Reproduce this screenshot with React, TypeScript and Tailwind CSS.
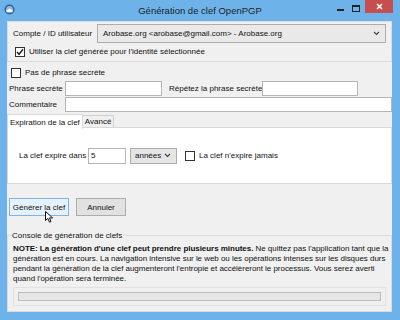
const FONT = "font-['Liberation_Sans','Arial',sans-serif]"

function Checkbox({ checked = false }: { checked?: boolean }) {
  return (
    <span className="flex h-[10px] w-[10px] shrink-0 items-center justify-center border border-[#333] bg-white">
      {checked && (
        <svg width="8" height="8" viewBox="0 0 8 8">
          <path d="M1 4 L3 6.3 L7 1.2" stroke="#222" strokeWidth="1.4" fill="none" />
        </svg>
      )}
    </span>
  )
}

function Chevron() {
  return (
    <svg width="7" height="5" viewBox="0 0 7 5">
      <path d="M1 1 L3.5 3.5 L6 1" stroke="#444" strokeWidth="1.2" fill="none" />
    </svg>
  )
}

function TitleBar() {
  return (
    <div className="relative flex h-[21px] items-center justify-center">
      <svg className="absolute left-[4px] top-[4px]" width="11" height="11" viewBox="0 0 11 11">
        <circle cx="5.5" cy="5.5" r="5" fill="#2f5f93" />
        <circle cx="5.5" cy="5.5" r="3.6" fill="#8fb8de" />
        <path d="M2.5 6.5 L5.5 4.5 L8.5 6.5 L8.5 8 L2.5 8 Z" fill="#fff" />
      </svg>
      <span className="whitespace-nowrap text-[9.5px] text-[#222]">Génération de clef OpenPGP</span>
      <div className="absolute right-[7px] top-0 flex items-start">
        <span className="mr-[8px] mt-[9px] h-[2px] w-[7px] bg-[#222]" />
        <span className="mr-[5px] mt-[5px] h-[7px] w-[8px] border border-t-2 border-[#222]" />
        <span className="flex h-[13px] w-[28px] items-center justify-center bg-[#c74e4e]">
          <svg width="7" height="7" viewBox="0 0 7 7">
            <path d="M1 1 L6 6 M6 1 L1 6" stroke="#fff" strokeWidth="1.6" />
          </svg>
        </span>
      </div>
    </div>
  )
}

export default function App() {
  return (
    <div className={`flex h-[320px] w-[400px] flex-col bg-[#6db3ea] ${FONT} whitespace-nowrap text-[8px] leading-[11px] text-[#111]`}>
      <TitleBar />
      <div className="relative ml-[7px] mr-[8px] mb-[8px] flex flex-1 flex-col bg-[#f0f0f0]">
        {/* account group */}
        <div className="flex flex-col gap-[3px] border border-[#dcdcdc] px-[5px] pb-[4px] pt-[2px]">
          <div className="flex items-center gap-[4px]">
            <span className="w-[80px]">Compte / ID utilisateur</span>
            <div className="flex h-[19px] flex-1 items-center justify-between border border-[#adadad] bg-[#e9e9e9] px-[5px]">
              <span>Arobase.org &lt;arobase@gmail.com&gt; - Arobase.org</span>
              <Chevron />
            </div>
          </div>
          <div className="flex items-center gap-[4px] pl-[2px]">
            <Checkbox checked />
            <span>Utiliser la clef générée pour l'identité sélectionnée</span>
          </div>
        </div>

        <div className="mt-[5px] flex items-center gap-[4px] pl-[4px]">
          <Checkbox />
          <span>Pas de phrase secrète</span>
        </div>

        <div className="mt-[3px] flex items-center pl-[2px]">
          <span className="w-[56px]">Phrase secrète</span>
          <span className="h-[15px] w-[97px] border border-[#b5b5b5] bg-white" />
          <span className="ml-[7px] w-[93px]">Répétez la phrase secrète</span>
          <span className="h-[15px] w-[96px] border border-[#b5b5b5] bg-white" />
        </div>

        <div className="mt-[1px] flex items-center pl-[2px]">
          <span className="w-[56px]">Commentaire</span>
          <span className="h-[15px] flex-1 border border-[#b5b5b5] bg-white" />
        </div>

        {/* tabs */}
        <div className="mt-[1px] flex h-[15px] items-end">
          <span className="z-10 -mb-px flex h-[15px] items-center border border-b-0 border-[#d9d9d9] bg-white px-[2px]">
            Expiration de la clef
          </span>
          <span className="flex h-[13px] items-center border border-l-0 border-[#d0d0d0] bg-[#f0f0f0] px-[2px]">Avancé</span>
        </div>
        <div className="-mt-px flex h-[57px] items-center border border-[#d9d9d9] bg-white pl-[11px]">
          <span className="w-[69px]">La clef expire dans</span>
          <span className="flex h-[16px] w-[38px] items-center border border-[#b5b5b5] bg-white pl-[2px]">5</span>
          <div className="ml-[4px] flex h-[16px] w-[47px] items-center justify-between border border-[#adadad] bg-[#e5e5e5] pl-[4px] pr-[5px]">
            <span>années</span>
            <Chevron />
          </div>
          <span className="ml-[8px]">
            <Checkbox />
          </span>
          <span className="ml-[4px]">La clef n'expire jamais</span>
        </div>

        {/* buttons */}
        <div className="mt-[14px] flex gap-[7px] pl-[2px]">
          <div className="relative flex h-[18px] w-[60px] items-center justify-center border border-[#7eb4ea] bg-[#e5f1fb]">
            Générer la clef
            <svg className="absolute left-[35px] top-[12px]" width="9" height="12" viewBox="0 0 9 12">
              <path d="M0.5 0.5 L0.5 9.5 L2.8 7.4 L4.5 11.2 L6 10.5 L4.4 6.9 L7.6 6.9 Z" fill="#fff" stroke="#111" strokeWidth="1" />
            </svg>
          </div>
          <div className="flex h-[18px] w-[50px] items-center justify-center border border-[#adadad] bg-[#e1e1e1]">
            Annuler
          </div>
        </div>

        {/* console */}
        <div className="relative mt-[19px] flex flex-1 flex-col border border-[#dcdcdc] px-[5px] pb-[3px] pt-[8px]">
          <span className="absolute left-[4px] top-[-6px] bg-[#f0f0f0] pr-[2px]">Console de génération de clefs</span>
          <p className="leading-[10px] tracking-[-0.04px]">
            <b>NOTE: La génération d'une clef peut prendre plusieurs minutes.</b> Ne quittez pas l'application tant que la
            <br />
            génération est en cours. La navigation intensive sur le web ou les opérations intenses sur les disques durs
            <br />
            pendant la génération de la clef augmenteront l'entropie et accélèreront le processus. Vous serez averti
            <br />
            quand l'opération sera terminée.
          </p>
          <div className="mt-[3px] border border-[#e2e2e2] p-[4px]">
            <div className="h-[9px] border border-[#bcbcbc] bg-[#e6e6e6]" />
          </div>
        </div>
      </div>
    </div>
  )
}
